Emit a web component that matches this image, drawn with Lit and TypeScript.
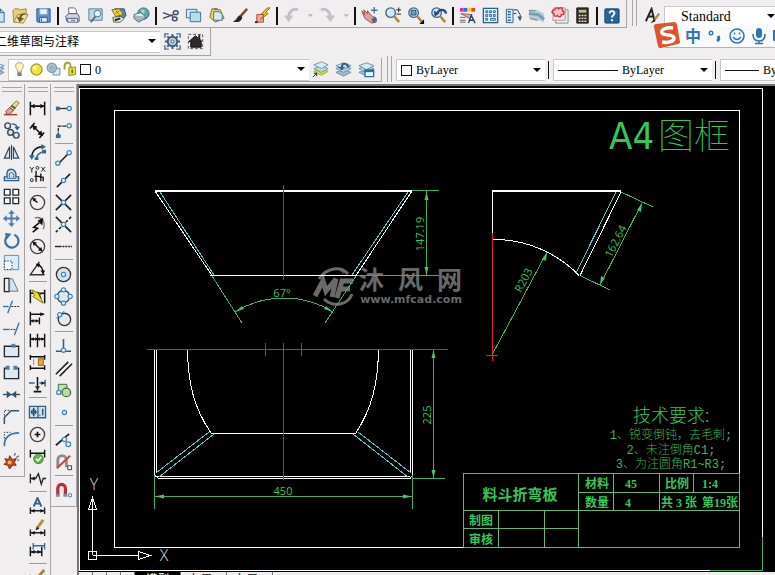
import { LitElement, html, svg, css, type SVGTemplateResult } from "lit";
import { customElement, property } from "lit/decorators.js";

const page = svg`<path d="M4 3h9l4 4v10H4z" fill="#cfe4f1" stroke="#2f6a92"/><path d="M13 3v4h4" stroke="#2f6a92"/>`;
const layers = svg`<path d="M2 13l8-3 8 3-8 4z" fill="#9dbdd2" stroke="#6a91ab"/><path d="M2 9l8-3 8 3-8 4z" fill="#b9d6e6" stroke="#6a91ab"/><path d="M2 6l8-3 8 3-8 4z" fill="#d5ebf5" stroke="#6a91ab"/>`;
const hdim = svg`<path d="M2.500 6v9M17.500 6v9M3 10.500h14" stroke-width="1.500"/><path d="M3 10.500l4-2v4zM17 10.500l-4-2v4z" fill="#111" stroke="none"/>`;
const lowdim = svg`<path d="M2.500 11v7M17.500 11v7M3 14.500h14" stroke-width="1.500"/><path d="M3 14.500l4-2v4zM17 14.500l-4-2v4z" fill="#111" stroke="none"/>`;
const node = (x: number, y: number) =>
  svg`<circle cx=${x} cy=${y} r="2.200" fill="#eaf6fc" stroke="#3f86b5" stroke-width="1.300"/>`;
const lens = svg`<circle cx="8" cy="7" r="5" fill="#cfe8f5" stroke="#3b6685" stroke-width="1.400"/><path d="M12 11l5 6" stroke="#b98339" stroke-width="2.600"/>`;

const ICONS: Record<string, SVGTemplateResult> = {
  new: page,
  open: svg`<path d="M2 5l2-2h4l2 1 6-1v6l-5 8H3z" fill="#e6cf7c" stroke="#a38a45"/><path d="M3 17l4-8h11l-5 9z" fill="#f3df9a" stroke="#a38a45"/><path d="M16 8c-5-1-7 1-7 4l-3-1 3 6 5-4-3 0c0-3 2-4 5-5z" fill="#6a5432" stroke="none"/>`,
  save: svg`<path d="M3 3h14v14H4l-1-1z" fill="#5b93cf" stroke="#28598d"/><path d="M6 3h8v6H6z" fill="#e8f2fa" stroke="#7fa7cc"/><path d="M6 12h8v5H6z" fill="#e3ebf2" stroke="#28598d"/><path d="M8 13v3" stroke="#28598d"/>`,
  print: svg`<path d="M6 8V2h6l2 2v5z" fill="#fff" stroke="#667"/><path d="M3 11l3-3h9l2 3v5H4z" fill="#cdd2e8" stroke="#4f5676"/><path d="M5 13h10l1 4H5z" fill="#f5f6fc" stroke="#4f5676"/><path d="M8 15h5" stroke="#4f5676"/>`,
  preview: svg`<path d="M3 3h14v12H3z" fill="#bcd9ea" stroke="#54819c"/><circle cx="12" cy="8" r="3.500" fill="#eef8fd" stroke="#3f6c8c"/><path d="M10 11l-5 6" stroke="#5e6d79" stroke-width="2"/>`,
  publish: svg`<path d="M6 3h10l2 7-6 6z" fill="#4e8ab5" stroke="#2a4e68"/><path d="M3 4l8-1 4 6-8 2z" fill="#f3d648" stroke="#806a18"/><path d="M4 12l8-1 4 2-4 4H5z" fill="#f4f2dd" stroke="#555"/><path d="M7 5l4 4M11 5l-4 3" stroke="#c05d1f"/><path d="M6 15l6-2" stroke="#222" stroke-width="2"/>`,
  web: svg`<circle cx="12" cy="8" r="6" fill="#5ea7ae" stroke="#34697c"/><path d="M9 4c4-1 6 2 3 4s-1 4 2 4" fill="#b5dfae" stroke="none"/><path d="M2 9l7-2 5 4-7 4z" fill="#e6edf2" stroke="#556b7a"/><path d="M2 10v3l5 4 7-4v-2" fill="#a7b3bd" stroke="#556b7a"/>`,
  cut: svg`<path d="M2 7l11 4M2 13l11-4" stroke="#444c55" stroke-width="1.500"/><ellipse cx="15.500" cy="7" rx="2.500" ry="2" stroke="#3c4c6c" stroke-width="1.500"/><ellipse cx="14.500" cy="13.500" rx="2.500" ry="2" stroke="#3c4c6c" stroke-width="1.500"/>`,
  copy: svg`<path d="M2.500 3.500h11v9h-11z" fill="#d5e9f4" stroke="#39718f"/><path d="M6.500 6.500h11v10h-11z" fill="#b8dcef" stroke="#39718f"/>`,
  paste: svg`<path d="M5 3l9 1 4 9-9 4-6-5z" fill="#e7cf71" stroke="#8b7325"/><path d="M7 6h6l3 3v6H7z" fill="#d4e8f4" stroke="#4a7893"/><path d="M7 3h4" stroke="#777" stroke-width="2"/>`,
  brush: svg`<path d="M18 3l-8 9" stroke="#7d4a2d" stroke-width="2.600"/><path d="M11 10c-4 0-3 5-8 6 4 2 9 1 10-4z" fill="#2d2520" stroke="none"/>`,
  blockedit: svg`<path d="M4 9h7v8H4z" fill="#f6a59a" stroke="#b0493b"/><path d="M15 2l-6 6 3 1-4 5 8-6-3-1 5-5z" fill="#f2c931" stroke="#8a6b11"/><path d="M2 17h3" stroke="#333" stroke-width="2"/>`,
  undo: svg`<path d="M17 4C11 2 7 6 7 13" stroke="#c2c2c6" stroke-width="3"/><path d="M2 10h10l-5 7z" fill="#c2c2c6" stroke="none"/>`,
  redo: svg`<path d="M3 4c6-2 10 2 10 9" stroke="#c2c2c6" stroke-width="3"/><path d="M8 10h10l-5 7z" fill="#c2c2c6" stroke="none"/>`,
  pan: svg`<path d="M2 5l3 4-1-5 4 4 0-3 4 5 5 3v4l-5 1-7-5z" fill="#dca29b" stroke="#96524d"/><path d="M12 14l4-3 2 4-4 3z" fill="#46698a" stroke="none"/><path d="M15 1v7M11.500 4.500h7" stroke="#45759b" stroke-width="1.400"/>`,
  zoomrt: svg`${lens}<path d="M14 4h5M16.500 1.500v5M14 8.500h5" stroke="#222"/>`,
  zoomwin: svg`${lens}<path d="M5.500 4.500h5v5h-5z" fill="#6ea3c4" stroke="#244a66"/><path d="M19 14v5h-5z" fill="#000" stroke="none"/>`,
  zoomprev: svg`${lens}<path d="M18 8c-1-5-7-5-9-1" stroke="#1f4a74" stroke-width="2.400"/><path d="M5 5l1 6 5-3z" fill="#1f4a74" stroke="none"/>`,
  props: svg`<path d="M2 2h4v4H2z" fill="#d62fb4" stroke="none"/><path d="M6 2h4v4H6z" fill="#4062dd" stroke="none"/><path d="M10 2h4v4h-4z" fill="#ecd72d" stroke="none"/><path d="M14 2h4v4h-4z" fill="#e04a32" stroke="none"/><path d="M3 8l12 1-3 4z" fill="#e6a7a0" stroke="#93615c"/><path d="M2 12h6M2 15h6M2 17h6" stroke="#666"/><path d="M11 18l3-8 4 8M12 15h4" stroke="#25425c" stroke-width="1.400"/>`,
  center: svg`<path d="M2.500 2.500h15v15h-15z" fill="#eaf5fb" stroke="#27618a" stroke-width="1.400"/><path d="M5 5h2v2H5zM5 9h2v2H5zM5 13h2v2H5zM9 5h2v2H9zM9 9h2v2H9zM13 5h2v2h-2zM13 9h2v2h-2zM10 13h5v2h-5z" stroke="#27618a"/>`,
  palettes: svg`<path d="M2.500 3.500h7v14h-7z" fill="#d9ebf5" stroke="#27618a"/><path d="M4 6h3M4 9h3M4 12h3M4 15h3" stroke="#27618a" stroke-width="1.500"/><path d="M10 4h4l3 5v4M10 8h3" stroke="#333"/><path d="M14 11h5l-2 5z" fill="#27618a" stroke="none"/>`,
  sheetset: svg`<path d="M2 4h8l8 4v9l-9-3-7-1z" fill="#bccbd2" stroke="none"/><path d="M2 8l10 1 6 5" stroke="#6ea0b8" stroke-width="3"/><path d="M2 5l7 0M3 13l8 2" stroke="#8596a0" stroke-width="1.500"/>`,
  markup: svg`<path d="M6 4h13v14H6z" fill="#eee" stroke="#888"/><path d="M4 2h12v13H3z" fill="#fbe9ea" stroke="#999"/><path d="M5 4c1-3 4-2 4-1 2-2 5-1 4 2 3 1 2 5-1 4 0 3-3 3-4 1-2 2-5 0-4-2-3-1-2-4 1-4z" fill="#f7c6ca" stroke="#d63246" stroke-width="1.500"/>`,
  calc: svg`<path d="M4 2h12v16H4z" fill="#3a2f24" stroke="#1b1510"/><path d="M6 4h8v3H6z" fill="#a8c79a" stroke="none"/><path d="M6 10h8M6 13h8M6 16h8" stroke="#e4ddd2" stroke-width="1.500" stroke-dasharray="2 1"/>`,
  help: svg`<rect x="3" y="3" width="15" height="15" rx="1" fill="#2a659a" stroke="#194468"/><path d="M8 8c0-4 6-3 5 0-.500 2-2.500 2-2.500 4M10.500 14v2" stroke="#fff" stroke-width="2"/>`,
  textstyle: svg`<path d="M3 15L9 2l3 12M5 10h6" stroke="#222" stroke-width="2"/><path d="M17 7l-6 8" stroke="#a88c4a" stroke-width="2.400"/><path d="M12 12l-4 5 5-2z" fill="#222" stroke="none"/>`,
  gear: svg`<path d="M2 6V2h4M14 2h4v4M18 14v4h-4M6 18H2v-4" stroke="#4b6f8d" stroke-width="1.500"/><circle cx="10" cy="10" r="5" fill="#b6cbdb" stroke="#3e5c76" stroke-width="2"/><path d="M10 2v3M10 15v3M2 10h3M15 10h3M4.500 4.500l2 2M13.500 13.500l2 2M4.500 15.500l2-2M13.500 6.500l2-2" stroke="#3e5c76" stroke-width="2"/><circle cx="10" cy="10" r="1.500" fill="#fff" stroke="#3e5c76"/>`,
  home: svg`<path d="M2.500 2.500h15v15h-15z" stroke="#555" stroke-dasharray="3 2"/><path d="M3 10l7-6 6 5v7H5v-6z" fill="#2b2b2b" stroke="#111"/><path d="M14 3v5" stroke="#222" stroke-width="2"/>`,
  layerprops: layers,
  bulb: svg`<path d="M10 2c-6 0-5 6-2.500 8v3h5v-3C15 8 16 2 10 2z" fill="#fbf6c0" stroke="#a79a50"/><path d="M8 14h4v3H8z" fill="#8e949b" stroke="#666"/>`,
  sun: svg`<circle cx="10" cy="10" r="6.500" fill="#f1e432" stroke="#9b9a1e" stroke-width="1.500"/><circle cx="8" cy="8" r="2.500" fill="#fbf8a0" stroke="none"/>`,
  vpfreeze: svg`<path d="M9.500 8.500h8v8h-8z" fill="#dbe9f1" stroke="#5e8296"/><circle cx="8" cy="8" r="5.500" fill="#a9c3cf" stroke="#7d9dab" stroke-width="1.500"/><circle cx="8" cy="8" r="2" stroke="#7d9dab"/>`,
  lock: svg`<path d="M3 10V6c0-5 7-5 7-1v4" stroke="#aaa035" stroke-width="2.200"/><path d="M8 8l8-1v9l-8 1z" fill="#e9dc37" stroke="#8b8220"/><path d="M12 10v4" stroke="#5c5515" stroke-width="1.500"/>`,
  makecurrent: svg`<path d="M3 12l8-3 7 3-7 4z" fill="#d9d63c" stroke="#a6a53a"/><path d="M3 9l8-3 7 3-7 4z" fill="#b9e0d2" stroke="#6d9f93"/><path d="M3 5l8-3 7 3-7 4z" fill="#d2eff3" stroke="#6d98aa"/><path d="M2 18l4-4M3 14h3v3" stroke="#223"/>`,
  layerback: svg`${layers}<path d="M8 9c0-7 6-6 7-1" stroke="#3a5f88" stroke-width="2.200"/><path d="M4 7h8l-4 4z" fill="#3a5f88" stroke="none"/>`,
  layerstates: svg`${layers}<path d="M8.500 10.500h9v7h-9z" fill="#f3fafd" stroke="#2b6f9b" stroke-width="1.400"/><path d="M8 11.500h10" stroke="#2b6f9b" stroke-width="2.500"/>`,

  erase: svg`<path d="M2 16.500h14" stroke="#b5382b" stroke-width="1.500"/><path d="M8 9l7-7 3 2-6 8z" fill="#efd78f" stroke="#8a713b"/><path d="M4 13l4-4 4 3-4 4H5z" fill="#e8a0a0" stroke="#7d4747"/><path d="M10 7l4 3" stroke="#3e6a2e" stroke-width="2"/>`,
  copyobj: svg`<circle cx="6" cy="5" r="3" fill="#e4edf3" stroke="#3c4d5c" stroke-width="1.500"/><circle cx="9" cy="12" r="3" fill="#dfe8ee" stroke="#3c4d5c" stroke-width="1.500"/><circle cx="15" cy="15" r="3" fill="#dfe8ee" stroke="#3c4d5c" stroke-width="1.500"/><path d="M10 3c4 0 6 2 6 5" stroke="#2e5f87" stroke-width="1.500"/><path d="M13 6h6l-3 4z" fill="#2e5f87" stroke="none"/>`,
  mirror: svg`<path d="M8 4v12H2.500zM12 4v12h5.500z" fill="#dbe7ef" stroke="#2b4b66" stroke-width="1.300"/><path d="M10 2v16" stroke="#333"/>`,
  offset: svg`<path d="M2.500 16.500h15v-4h-3c1-4-1-8-5-8s-5 4-4 8h-3z" fill="#cfe3f0" stroke="#2b5f89" stroke-width="1.400"/><path d="M5 14h10M8 13c-1-3 0-5 2-5s3 2 2 5" stroke="#2b5f89"/>`,
  array: svg`<path d="M2.500 2.500h6v6h-6zM11.500 2.500h6v6h-6zM2.500 11.500h6v6h-6zM11.500 11.500h6v6h-6z" fill="#fff" stroke="#1f2a33" stroke-width="1.400"/>`,
  move: svg`<path d="M10 3v14M3 10h14" stroke="#4a7fae" stroke-width="2"/><path d="M10 1l3.500 4h-7zM10 19l3.500-4h-7zM1 10l4-3.500v7zM19 10l-4-3.500v7z" fill="#4a7fae" stroke="none"/>`,
  rotate: svg`<path d="M6 5a7 7 0 1 0 7-1" stroke="#3d719d" stroke-width="2.400"/><path d="M3 2l7 1-5 6z" fill="#3d719d" stroke="none"/>`,
  scale: svg`<path d="M2.500 2.500h15v15h-15z" fill="#d9ebf8" stroke="#5c8fba"/><path d="M2.500 8.500h8v9h-8z" fill="#f4fafd" stroke="#222" stroke-dasharray="1.500 1.500"/>`,
  stretch: svg`<path d="M2.500 3.500h5v14h-5z" stroke="#222" stroke-width="1.400"/><path d="M8 4l3 0 6 13H8z" fill="#d2e4f1" stroke="#4d7697"/>`,
  trim: svg`<path d="M11 4L6 17" stroke="#3d78a9" stroke-width="1.500"/><path d="M1 10h6" stroke="#3d78a9" stroke-width="1.500"/><path d="M10 10h9" stroke-dasharray="2 1"/>`,
  extend: svg`<path d="M18 4l-5 13" stroke="#3d78a9" stroke-width="1.500"/><path d="M1 11h7" stroke="#3d78a9" stroke-width="1.500"/><path d="M9 11h6" stroke-dasharray="2 1"/>`,
  breakpt: svg`<path d="M2.500 5.500h15v11h-15z" fill="#ddeaf2" stroke="#1f2a33" stroke-width="1.400"/><path d="M10 3h4v4h-4z" fill="#4c80ab" stroke="none"/>`,
  break: svg`<path d="M5 5.500H2.500v11h15v-11H15" fill="#ddeaf2" stroke="#1f2a33" stroke-width="1.400"/><path d="M4 3h4v4H4zM12 3h4v4h-4z" fill="#4c80ab" stroke="none"/>`,
  join: svg`<path d="M1 10h18" stroke="#30536f" stroke-width="1.500"/><path d="M10 10L5 6v8zM10 10l5-4v8z" fill="#30536f" stroke="none"/>`,
  chamfer: svg`<path d="M2.500 18v-7l7-7H18" stroke="#30536f" stroke-width="1.600"/><path d="M2.500 9V3.500H9" stroke-dasharray="1.500 1.500"/>`,
  fillet: svg`<path d="M2.500 18C2 9 8 4 18 4" stroke="#3b77a6" stroke-width="1.800"/><path d="M2.500 10V3.500H9" stroke-dasharray="1.500 1.500"/>`,
  explode: svg`<path d="M3 8l4 1 1-4 3 4 4-1-2 4 2 3-4 0-3 4-2-4-4-1 3-2z" fill="#c34a22" stroke="#7d2712"/><path d="M13 5l1-3M15 7l3-2M16 9l2 1" stroke="#777" stroke-width="1.500"/><circle cx="8" cy="12" r="2" fill="#f2c13d" stroke="none"/>`,

  dimlinear: svg`<path d="M2.500 3v14M17.500 3v14M3 7.500h14" stroke="#111" stroke-width="1.600"/><path d="M3 7.500l4-2.500v5zM17 7.500L13 5v5z" fill="#111" stroke="none"/>`,
  dimaligned: svg`<path d="M2 8l5-6M12 18l5-6M5 5l10 10" stroke="#111" stroke-width="1.600"/><path d="M4 4l6 2-4 4zM16 16l-6-2 4-4z" fill="#111" stroke="none"/>`,
  dimarc: svg`<path d="M4 15C4 8 9 4 15 4" stroke="#111" stroke-width="1.600"/><path d="M9 17c0-5 3-7 8-8" stroke="#34688f" stroke-width="1.600"/><path d="M1 13h6l-3 5zM14 1l5 3-5 3zM15 7h4v4h-4zM7 15h4v3H7z" fill="#34688f" stroke="none"/>`,
  dimordinate: svg`<path d="M2 2l2 3 2-3M4 5v3M14 2l4 5M18 2l-4 5" stroke="#222"/><circle cx="10" cy="3" r="1.500"/><circle cx="4" cy="16" r="1.500"/><path d="M8.500 6v11.500M13.500 9v8M7 12h4l5 1v4" stroke="#111" stroke-width="1.400"/>`,
  dimradius: svg`<circle cx="10" cy="10" r="7.500" stroke="#444" stroke-width="1.400"/><path d="M10 10L6 7" stroke="#111" stroke-width="1.600"/><path d="M4 5l5 1-3 3z" fill="#111" stroke="none"/>`,
  dimjog: svg`<path d="M7 3c8-2 12 5 9 12" stroke="#777" stroke-width="1.400"/><path d="M5 18l5-4-4-1 6-5" stroke="#111" stroke-width="1.700"/><path d="M16 3l-6 3 5 5z" fill="#111" stroke="none"/>`,
  dimdiameter: svg`<circle cx="10" cy="10" r="7.500" stroke="#444" stroke-width="1.400"/><path d="M6 6l8 8" stroke="#111" stroke-width="1.600"/><path d="M4.500 4.500l5 1.500-3.500 3.500zM15.500 15.500L10.500 14l3.500-3.500z" fill="#111" stroke="none"/>`,
  dimangular: svg`<path d="M12 3L2.500 16.500h15" stroke="#333" stroke-width="1.500"/><path d="M10 6c4 1 6 5 6 10" stroke="#111" stroke-width="1.500"/><path d="M8 5l5 0-2 4zM16 16l-3-4h5z" fill="#111" stroke="none"/>`,
  dimquick: svg`<path d="M2.500 3v14M17.500 3v14M3 6.500h14" stroke="#111" stroke-width="1.600"/><path d="M4 3l10 5-2 1 4 8-11-7 2-1z" fill="#eddc2c" stroke="#7f7618"/><path d="M10 5l4 7" stroke="#222"/>`,
  dimbaseline: svg`<path d="M2.500 3v14M3 5.500h14M3 12.500h8M12 9v7" stroke="#111" stroke-width="1.500"/><path d="M17 5.500l-4-2v4zM3 12.500l3-2v4zM11 12.500l-3-2v4z" fill="#111" stroke="none"/>`,
  dimcontinue: svg`<path d="M2.500 3v14M10 3v14M17.500 3v14M3 8.500h14" stroke="#111" stroke-width="1.500"/><path d="M3 8.500l3-2v4zM9.500 8.500l-2-2v4zM17 8.500l-3-2v4zM10.500 8.500l2-2v4z" fill="#111" stroke="none"/>`,
  dimspace: svg`<path d="M2.500 2v5M17.500 2v5M3 4h14M2.500 13v5M17.500 13v5M3 16h14" stroke="#111" stroke-width="1.500"/><path d="M11 6h5v7h-5z" fill="#e8ab3c" stroke="#8c6013"/><path d="M6 7v6" stroke-dasharray="1 1"/>`,
  dimbreak: svg`<path d="M10 2v14M6 17.500h8" stroke="#111" stroke-width="1.600"/><path d="M1 8.500h6M12 8.500h6M18 5v7" stroke="#34688f" stroke-width="1.600"/><path d="M10 15l-3-3h6zM18 8.500l-4-2v4z" fill="#222" stroke="none"/>`,
  tolerance: svg`<path d="M1.500 3.500h17v12h-17zM10.500 3.500v12" fill="#cbe1f0" stroke="#326486" stroke-width="1.400"/><circle cx="6" cy="9.500" r="2.500" stroke="#244b68"/><path d="M6 5v9M3 9.500h6M12 13h1M15.500 6v7" stroke="#244b68" stroke-width="1.400"/>`,
  centermark: svg`<circle cx="10" cy="10" r="7.500" stroke="#444" stroke-width="1.400"/><path d="M10 7v6M7 10h6" stroke="#111" stroke-width="1.800"/>`,
  inspect: svg`<path d="M2.500 3v8M17.500 3v8M3 6.500h14" stroke="#111" stroke-width="1.500"/><circle cx="11" cy="12.500" r="5" fill="#66b548" stroke="#3c8225"/><path d="M8.500 12.500l2 2 3.500-4" stroke="#fff" stroke-width="1.600"/>`,
  jogline: svg`<path d="M2.500 5v10M3 10h5l3-5 3 11 2-6h3" stroke="#222" stroke-width="1.400"/><path d="M3 10l4-2v4z" fill="#111" stroke="none"/>`,
  dimedit: svg`${lowdim}<path d="M6 10l4-9 4 9M7.500 7h5" stroke="#2f628a" stroke-width="2"/>`,
  dimtedit: svg`${lowdim}<path d="M16 1l-6 8" stroke="#c08e3b" stroke-width="3"/><path d="M9 8l-1 4 4-2z" fill="#222" stroke="none"/>`,
  dimupdate: svg`<path d="M5.500 2v7M17.500 2v7M6 5h11" stroke="#34688f" stroke-width="1.400"/><path d="M2.500 6v10M14.500 6v10M3 11.500h11" stroke="#111" stroke-width="1.500"/><path d="M3 11.500l4-2v4zM14 11.500l-4-2v4z" fill="#111" stroke="none"/>`,
  dimstyle: svg`${hdim}<path d="M17 1l-6 7" stroke="#a98239" stroke-width="3"/>`,

  track: svg`<path d="M4 10h11" stroke="#333" stroke-width="1.400"/><path d="M2 8h4v4H2z" fill="#3c6c91" stroke="none"/>${node(16, 10)}`,
  snapfrom: svg`<path d="M4.500 16V5.500H14" stroke="#222" stroke-width="1.300" stroke-dasharray="4 1"/><path d="M2 14h5v4H2z" fill="#3c6c91" stroke="none"/>${node(16, 5)}`,
  endpoint: svg`<path d="M4 16L16 4" stroke="#222" stroke-width="1.700"/>${node(4, 15)}${node(16, 4)}`,
  midpoint: svg`<path d="M3 17L17 3" stroke="#222" stroke-width="1.700"/>${node(10, 10)}`,
  intersect: svg`<path d="M2 2l16 16M18 2L2 18" stroke="#222" stroke-width="1.700"/>${node(10, 10)}`,
  appint: svg`<path d="M2 2l16 16" stroke="#222" stroke-width="1.700"/><path d="M18 2L2 18" stroke="#222" stroke-width="1.700" stroke-dasharray="3 2"/>${node(10, 10)}`,
  extension: svg`<path d="M1 10h7" stroke="#222" stroke-width="1.500"/><path d="M9 10h10" stroke="#222" stroke-width="1.500" stroke-dasharray="2 1"/>`,
  osnapcenter: svg`<circle cx="10" cy="10" r="7.500" fill="#cfe3ef" stroke="#333" stroke-width="1.400"/>${node(10, 10)}`,
  quadrant: svg`<circle cx="10" cy="10" r="6.500" fill="#d8e9f3" stroke="#333" stroke-width="1.400"/>${node(10, 3)}${node(10, 17)}${node(3, 10)}${node(17, 10)}`,
  tangent: svg`<circle cx="11" cy="11" r="6.500" fill="#dfeaf1" stroke="#333" stroke-width="1.400"/><path d="M2 10l9-8" stroke="#4b8ab5"/>${node(6, 6)}`,
  perpendicular: svg`<path d="M10 2v11M2 15h16" stroke="#2e5f80" stroke-width="1.600"/>${node(10, 14)}`,
  parallel: svg`<path d="M2 16L15 3M6 18L19 5" stroke="#222" stroke-width="1.700"/>`,
  insertpt: svg`<path d="M4.500 3.500h9v8h-9z" fill="#bfe0b0" stroke="#456b3b"/><circle cx="13" cy="12" r="4.500" fill="#b8dba8" stroke="#456b3b" stroke-width="1.300"/>${node(5, 12)}`,
  nodept: node(11, 10),
  nearest: svg`<path d="M2 15L16 3" stroke="#222" stroke-width="1.800"/><circle cx="15" cy="14" r="2.500" stroke="#3f86b5" stroke-width="1.300"/>${node(11, 9)}`,
  snapnone: svg`<path d="M4 15V8c0-7 9-7 9 0v7" stroke="#8c8c8c" stroke-width="3"/><path d="M3 16L17 3" stroke="#c64a34" stroke-width="2.200"/><path d="M14.500 13.500h4v4h-4z" fill="#fff" stroke="#333"/>`,
  osnapset: svg`<path d="M4 15V8c0-6 8-6 8 0v7" stroke="#b62f3b" stroke-width="3.400"/><path d="M2 15h4M10 15h4" stroke="#888" stroke-width="3"/><path d="M15.500 13.500h3v3h-3z" fill="#fff" stroke="#3c86b5"/>`,
};

const STANDARD_TOOLS = [
  "new", "open", "save", "|", "print", "preview", "publish", "web", "|",
  "cut", "copy", "paste", "brush", "blockedit", "|", "undo", "v", "redo", "v", "|",
  "pan", "zoomrt", "zoomwin", "zoomprev", "|",
  "props", "center", "palettes", "sheetset", "markup", "calc", "|", "help",
];
const MODIFY_TOOLS = [
  "erase", "copyobj", "mirror", "offset", "array", "move", "rotate", "scale", "stretch",
  "trim", "extend", "breakpt", "break", "join", "chamfer", "fillet", "explode",
];
const DIMENSION_TOOLS = [
  "dimlinear", "dimaligned", "dimarc", "dimordinate", "|",
  "dimradius", "dimjog", "dimdiameter", "dimangular", "|",
  "dimquick", "dimbaseline", "dimcontinue", "dimspace", "dimbreak", "|",
  "tolerance", "centermark", "inspect", "jogline", "|",
  "dimedit", "dimtedit", "dimupdate", "|", "dimstyle",
];
const SNAP_TOOLS = [
  "track", "snapfrom", "|", "endpoint", "midpoint", "intersect", "appint", "extension", "|",
  "osnapcenter", "quadrant", "tangent", "|", "perpendicular", "parallel", "insertpt", "nodept", "|",
  "nearest", "snapnone", "|", "osnapset",
];

const icon = (name: string) =>
  html`<svg class="icon" viewBox="0 0 20 20" fill="none" stroke="#222" aria-hidden="true">${ICONS[name]}</svg>`;

const arrow = html`<svg class="arrow" viewBox="0 0 9 5" aria-hidden="true"><path d="M1 0h8l-4 4z" /></svg>`;

@customElement("tool-strip")
class ToolStrip extends LitElement {
  @property({ attribute: false }) items: string[] = [];
  @property({ type: Boolean, reflect: true }) vertical = false;

  static styles = css`
    :host { display: flex; align-items: center; }
    :host([vertical]) { flex-direction: column; }
    button { display: flex; align-items: center; justify-content: center; width: 23px; height: 23px; padding: 0; border: 0; background: none; flex: none; }
    :host([vertical]) button { width: 22px; height: 22px; }
    button:hover { background: #dde6ee; }
    button.drop { width: 13px; }
    .icon { width: 19px; height: 19px; flex: none; }
    .arrow { width: 6px; height: 4px; fill: #b4b4b8; }
    .sep { width: 2px; height: 18px; margin: 0 2px; background: #111; flex: none; }
    :host([vertical]) .sep { width: 18px; height: 1px; margin: 2px 0 3px; background: #9c9a9b; }
  `;

  render() {
    return this.items.map((name) => {
      if (name === "|") return html`<span class="sep"></span>`;
      if (name === "v") return html`<button class="drop" aria-label="history">${arrow}</button>`;
      return html`<button aria-label=${name}>${icon(name)}</button>`;
    });
  }
}

@customElement("cad-drawing")
class CadDrawing extends LitElement {
  static styles = css`
    :host { display: block; }
    svg { display: block; width: 100%; height: auto; background: #000; }
    path, rect { fill: none; stroke-width: 1; }
    .w { stroke: #fff; shape-rendering: crispEdges; }
    .thick { stroke-width: 2; }
    .c { stroke: #62c3cd; shape-rendering: crispEdges; }
    .r { stroke: #ea1c24; shape-rendering: crispEdges; }
    .g { stroke: #42b05f; shape-rendering: crispEdges; }
    .head { fill: #4fc06c; }
    .frame { stroke: #62b874; shape-rendering: crispEdges; }
    text { fill: #35c65c; font-family: "Open Sans", "Noto Sans CJK SC", sans-serif; font-size: 11px; }
    .mid { text-anchor: middle; }
    .a4 { font-family: "DejaVu Sans Condensed", "DejaVu Sans", sans-serif; font-size: 38px; }
    .title { font-family: "Noto Sans CJK SC", sans-serif; font-size: 36px; font-weight: 100; }
    .req { font-family: "Noto Sans CJK SC", sans-serif; font-size: 18px; font-weight: 300; }
    .note { font-family: "Liberation Mono", "Noto Sans CJK SC", monospace; font-size: 12px; font-weight: 300; fill: #3fb45e; }
    .part { font-family: "Noto Sans CJK SC", sans-serif; font-size: 15px; font-weight: 700; }
    .cell { font-family: "Liberation Serif", "Noto Sans CJK SC", serif; font-size: 12px; font-weight: 700; }
    .axis { fill: #ddd; font-size: 16px; font-weight: 300; }
    .mark path { stroke: #6a6a6a; }
    .mark .bold { stroke-width: 5; }
    .mark .swoosh { stroke-width: 3; }
    .mark text { fill: #686868; font-weight: 700; }
    .mark .site { font-family: "Noto Sans CJK SC", sans-serif; font-size: 25px; }
    .mark .url { font-family: "DejaVu Sans", sans-serif; font-size: 11px; }
  `;

  render() {
    return html`
      <svg viewBox="79 86 696 486" role="img" aria-label="料斗折弯板">
        <g class="mark">
          <path class="bold" d="M315 296L323 281L326 291L336 279L332 297" />
          <path class="bold" d="M337 298L342 281H353M340 289H350" />
          <path class="swoosh" d="M319 279C327 267 341 266 348 274M324 299C333 308 348 305 352 294" />
          <path d="M343 268v6M340 271h6" />
          <text class="site" x="359" y="289">沐</text>
          <text class="site" x="398" y="289">风</text>
          <text class="site" x="437" y="289">网</text>
          <text class="url mid" x="411" y="303">www.mfcad.com</text>
        </g>

        <path class="w" d="M79.500 570.500V88.500M79 88.500H763M762.500 88V571M79 570.500H763" />
        <path class="g" d="M710 570.500H762.500V537" />
        <rect class="w" x="114.500" y="110.500" width="625" height="437" />

        <path class="w thick" d="M155 191H412M492 191H621" />
        <path class="w" d="M155 191L212 275.500M210 275.500H357M412 191L356 275.500" />
        <path class="c" d="M160 192L214 275M408 192L352 275" />
        <path class="r" d="M283.500 185V280" />
        <path class="g" d="M412 190.500H439M357 275.500H439M426.500 191V275M212 276L242 323M356 276L325 323M235 312A93 93 0 0 1 333 312" />
        <path class="head" d="M426.500 192l2 8h-4zM426.500 275l2-8h-4zM235 312l7-6 2 3zM333 312l-7-6-2 3z" />
        <text class="mid" x="282" y="297">67°</text>
        <text class="mid" transform="translate(424 234) rotate(-90)">147.19</text>

        <path class="w" d="M492.500 191V239M492 239.500A118 118 0 0 1 579 275.500M621 192L580 275.500" />
        <path class="c" d="M616 192L576 273" />
        <path class="r" d="M492.500 233V361M486 355.500H498" />
        <path class="g" d="M621 192L653 207M581 276L610 290M642 203L600 285M492 355L547 252" />
        <path class="head" d="M642 203l-1 9-4-2zM600 285l1-9 4 2zM547 252l-1 9-4-2z" />
        <text class="mid" transform="translate(619 243) rotate(-63)">162.64</text>
        <text class="mid" transform="translate(527 282) rotate(-62)">R203</text>

        <path class="w" d="M154.500 349V475l4 3.500H410l2.500-3V349M156.500 349V473M410.500 349V473M157 476.500H410" />
        <path class="w" d="M187.500 349C188 384 194 408 211 433M378.500 349C378 384 372 408 356 433M211 433.500H356" />
        <path class="c" d="M209 432L156 473M214 434L159 477M358 432L411 473M353 434L408 477" />
        <path class="r" d="M147 349.500H448M265.500 343V356M301.500 343V356M283.500 343V480" />
        <path class="g" d="M154.500 475V509M412.500 475V509M155 496.500H412M413 478.500H445M433.500 350V478" />
        <path class="head" d="M155 496.500l9-2v4zM412 496.500l-9-2v4zM433.500 350l2 8h-4zM433.500 478l2-8h-4z" />
        <text class="mid" x="283" y="495">450</text>
        <text class="mid" transform="translate(431 415) rotate(-90)">225</text>

        <text class="a4" x="609" y="149">A4</text>
        <text class="title" x="658" y="149">图框</text>
        <text class="req" x="633" y="422">技术要求:</text>
        <text class="note mid" x="671" y="439">1、锐变倒钝，去毛刺;</text>
        <text class="note mid" x="671" y="454">2、未注倒角C1;</text>
        <text class="note mid" x="671" y="468">3、为注圆角R1~R3;</text>

        <rect class="frame" x="463.500" y="473.500" width="276" height="74" />
        <path class="frame" d="M578.500 473V547M578 492.500H739M463 510.500H739M463 528.500H578M613.500 473V510M659.500 473V510M693.500 473V492M498.500 510V547M544.500 510V547" />
        <text class="part mid" x="520" y="500">料斗折弯板</text>
        <text class="cell" x="585" y="488">材料</text>
        <text class="cell" x="625" y="488">45</text>
        <text class="cell" x="665" y="488">比例</text>
        <text class="cell" x="702" y="488">1:4</text>
        <text class="cell" x="585" y="507">数量</text>
        <text class="cell" x="625" y="507">4</text>
        <text class="cell" x="661" y="507">共 3 张</text>
        <text class="cell" x="702" y="507">第19张</text>
        <text class="cell" x="469" y="525">制图</text>
        <text class="cell" x="469" y="544">审核</text>

        <rect class="w" x="88.500" y="551.500" width="8" height="8" />
        <path class="w" d="M92.500 555V500M92.500 498L88.500 509.500H96.500ZM93 555.500H138M150 555.500L138.500 551.500V559.500Z" />
        <text class="axis mid" x="94" y="490">Y</text>
        <text class="axis mid" x="164" y="561">X</text>
      </svg>
    `;
  }
}

@customElement("app-root")
class AppRoot extends LitElement {
  static styles = css`
    :host { display: flex; flex-direction: column; height: 100vh; overflow: hidden; position: relative; background: #f0eeef; color: #000; font-family: "Liberation Serif", "Noto Sans CJK SC", serif; font-size: 12px; }
    .row { display: flex; align-items: stretch; height: 28px; flex: none; overflow: hidden; }
    .bar { display: flex; align-items: center; box-sizing: border-box; border-right: 1px solid #a5a3a4; border-bottom: 1px solid #a5a3a4; flex: none; }
    .std { padding: 4px 3px 0 0; margin-left: -14px; }
    .grip { width: 3px; margin: 0 0 2px 5px; border-left: 1px solid #a5a3a4; border-right: 1px solid #a5a3a4; flex: none; }
    .grow { flex: 1; }
    .combo { display: flex; align-items: center; box-sizing: border-box; height: 22px; background: #fff; border: 1px solid #c9c7c8; border-width: 1px 0 1px 1px; min-width: 0; }
    .combo .icon { width: 17px; height: 17px; flex: none; }
    select { flex: 1; min-width: 0; height: 20px; padding: 0 0 0 4px; appearance: none; border: 0; background: none; font: inherit; color: inherit; }
    .arrow { width: 9px; height: 5px; margin-right: 4px; flex: none; }
    .swatch { width: 9px; height: 9px; border: 1px solid #111; flex: none; }
    .rule { width: 60px; height: 1px; margin-left: 4px; background: #111; flex: none; }
    .short { width: 34px; }
    .bigsep { width: 1px; height: 18px; margin: 0 4px 0 3px; background: #111; flex: none; }
    .styles { align-items: center; padding: 4px 0 0 4px; display: flex; flex: 1; min-width: 0; }
    .styles select { font-size: 14px; padding-left: 16px; }
    .styles .combo { height: 21px; }
    .styles .arrow { margin-right: 0; }
    .space { margin-left: -6px; padding-right: 3px; width: 217px; }
    .space select { padding-left: 0; }
    .space tool-strip { padding-left: 1px; }
    .layers { width: 397px; margin-left: -15px; padding-right: 3px; }
    .layers .combo { padding-left: 2px; }
    .layers .swatch { margin-left: 1px; }
    .layerbar { align-items: center; }
    .layerbar .grip { align-self: stretch; }
    .obj { display: flex; flex: 1; align-items: center; min-width: 0; padding-left: 4px; }
    .color { flex: 0 0 149px; padding-left: 4px; }
    .line { flex: 0 0 159px; }
    .weight { flex: 1; }
    .main { display: flex; flex: 1; align-items: flex-start; min-height: 0; }
    .palette { box-sizing: border-box; display: flex; flex-direction: column; align-items: center; width: 26px; border-right: 1px solid #a5a3a4; border-bottom: 1px solid #a5a3a4; padding-bottom: 5px; flex: none; }
    .edit { width: 25px; padding-right: 1px; }
    .hgrip { width: 20px; height: 3px; margin: 3px 0 5px; border-top: 1px solid #a5a3a4; border-bottom: 1px solid #a5a3a4; }
    .view { flex: 1; min-width: 0; border-left: 2px solid #77757a; border-top: 2px solid #77757a; }
    .tabs { display: flex; background: #f0eeef; }
    .tabs button { box-sizing: border-box; height: 16px; width: 46px; padding: 0; border: 0; border-right: 1px solid #777; background: none; font: inherit; line-height: 14px; color: #111; }
    .tabs .nav { width: 14px; }
    .tabs .on { background: #000; color: #fff; }
    .ime { position: absolute; top: 22px; right: 0; display: flex; align-items: center; width: 123px; height: 26px; overflow: hidden; }
    .ime svg { width: 123px; height: 26px; flex: none; }
    .zh { fill: #2b76b4; font: 700 16px "Noto Sans CJK SC", sans-serif; }
  `;

  render() {
    return html`
      <header class="row">
        <div class="bar std"><tool-strip .items=${STANDARD_TOOLS}></tool-strip></div>
        <span class="grip"></span>
        <div class="styles">
          <tool-strip .items=${["textstyle"]}></tool-strip>
          <div class="combo grow">
            <select aria-label="文字样式"><option>Standard</option></select>${arrow}
          </div>
        </div>
      </header>

      <div class="row">
        <div class="bar space">
          <div class="combo grow">
            <select aria-label="工作空间"><option>二维草图与注释</option></select>${arrow}
          </div>
          <tool-strip .items=${["gear", "home"]}></tool-strip>
        </div>
      </div>

      <div class="row layerbar">
        <div class="bar layers">
          <tool-strip .items=${["layerprops"]}></tool-strip>
          <div class="combo grow">
            ${icon("bulb")}${icon("sun")}${icon("vpfreeze")}${icon("lock")}
            <span class="swatch"></span>
            <select aria-label="图层"><option>0</option></select>${arrow}
          </div>
          <tool-strip .items=${["makecurrent", "layerback", "layerstates"]}></tool-strip>
        </div>
        <span class="grip"></span>
        <div class="obj">
          <div class="combo color">
            <span class="swatch"></span>
            <select aria-label="颜色"><option>ByLayer</option></select>${arrow}
          </div>
          <span class="bigsep"></span>
          <div class="combo line">
            <span class="rule"></span>
            <select aria-label="线型"><option>ByLayer</option></select>${arrow}
          </div>
          <span class="bigsep"></span>
          <div class="combo weight">
            <span class="rule short"></span>
            <select aria-label="线宽"><option>ByLayer</option></select>
          </div>
        </div>
      </div>

      <div class="main">
        <div class="palette edit">
          <span class="hgrip"></span>
          <tool-strip vertical .items=${MODIFY_TOOLS}></tool-strip>
        </div>
        <div class="palette">
          <span class="hgrip"></span>
          <tool-strip vertical .items=${DIMENSION_TOOLS}></tool-strip>
        </div>
        <div class="palette">
          <span class="hgrip"></span>
          <tool-strip vertical .items=${SNAP_TOOLS}></tool-strip>
        </div>
        <div class="view">
          <cad-drawing></cad-drawing>
          <nav class="tabs">
            <button class="nav" aria-label="首页"></button>
            <button class="nav" aria-label="上一页"></button>
            <button class="nav" aria-label="下一页"></button>
            <button class="nav" aria-label="末页"></button>
            <button class="on">模型</button>
            <button>布局1</button>
            <button>布局2</button>
          </nav>
        </div>
      </div>

      <div class="ime">
        <svg viewBox="0 0 123 26" fill="none" aria-hidden="true">
          <path d="M13 3H123V25H13z" fill="#fafafb" />
          <path d="M13 25.500H123" stroke="#b5b5b5" />
          <path d="M2 5q-1-2 2-3L22 0q2 0 3 2l3 18q0 2-2 2L9 26q-3 0-3-2z" fill="#df5430" />
          <path d="M21 6C14 5 8 8 10 11s12 1 12 5-7 5-12 4" stroke="#fff" stroke-width="3.500" />
          <text class="zh" x="33" y="20">中</text>
          <circle cx="59" cy="11" r="1.800" stroke="#2b76b4" stroke-width="1.400" />
          <path d="M66 14q2 3-1 5" stroke="#2b76b4" stroke-width="3" />
          <circle cx="85" cy="14" r="7" stroke="#2b76b4" stroke-width="1.600" />
          <path d="M81 15q4 5 8 0M82.500 10.500v2M87.500 10.500v2" stroke="#2b76b4" stroke-width="1.500" />
          <rect x="104" y="6" width="6" height="10" rx="3" fill="#2b76b4" />
          <path d="M101 12q0 7 6 7t6-7M107 19v3M103 21.500h8" stroke="#2b76b4" stroke-width="1.600" />
          <rect x="121" y="8" width="12" height="11" rx="1" fill="#2b76b4" />
        </svg>
      </div>
    `;
  }
}
